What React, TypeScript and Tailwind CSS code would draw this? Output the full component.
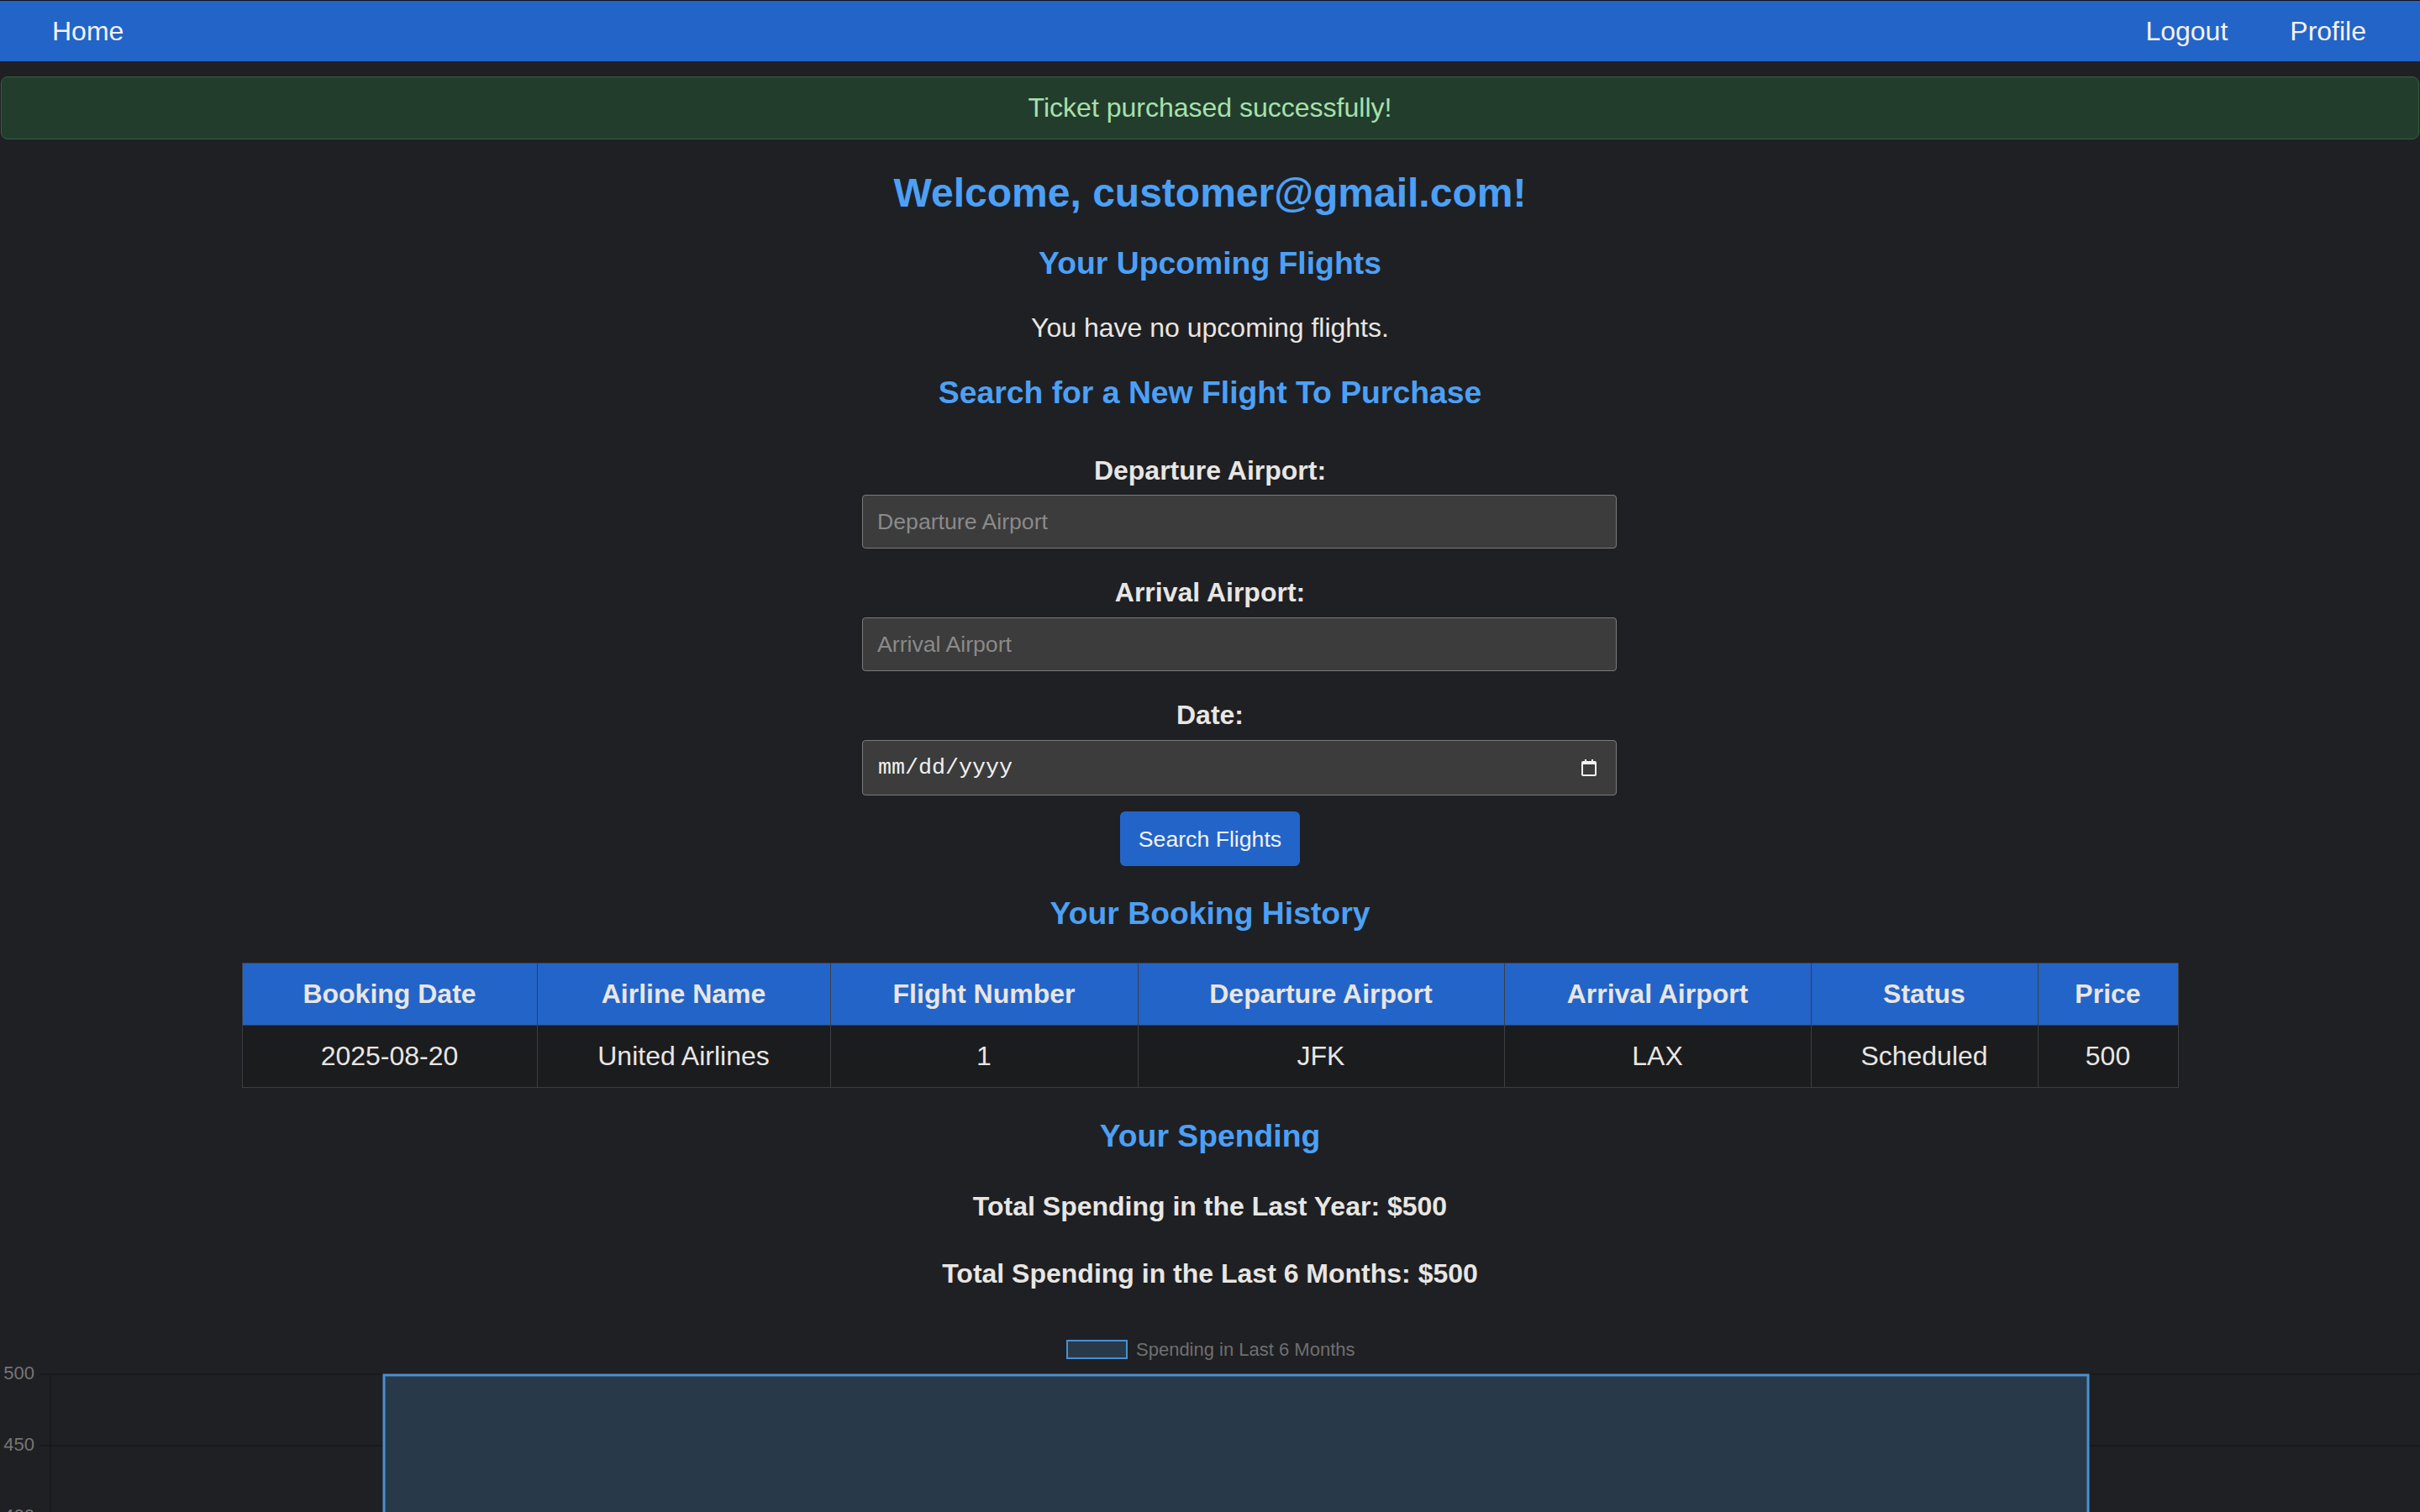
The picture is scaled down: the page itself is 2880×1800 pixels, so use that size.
const bookings = [
  {
    date: '2025-08-20',
    airline: 'United Airlines',
    flight: '1',
    from: 'JFK',
    to: 'LAX',
    status: 'Scheduled',
    price: '500',
  },
]

const columns = [
  { label: 'Booking Date', w: 'w-[351px]' },
  { label: 'Airline Name', w: 'w-[349px]' },
  { label: 'Flight Number', w: 'w-[366px]' },
  { label: 'Departure Airport', w: 'w-[436px]' },
  { label: 'Arrival Airport', w: 'w-[365px]' },
  { label: 'Status', w: 'w-[270px]' },
  { label: 'Price', w: 'w-[167px]' },
]

function CalendarIcon() {
  return (
    <svg width="20" height="22" viewBox="0 0 20 22" fill="none">
      <rect x="2" y="4" width="16" height="16" rx="1" stroke="#f2f2f2" strokeWidth="2" />
      <rect x="2" y="4" width="16" height="3" fill="#f2f2f2" />
      <rect x="5" y="1" width="2" height="4" fill="#f2f2f2" />
      <rect x="13" y="1" width="2" height="4" fill="#f2f2f2" />
    </svg>
  )
}

function SpendingChart() {
  // plot area starts at x=60, one category, bar is 72% of the width
  return (
    <svg className="mt-[36px] block h-[230px] w-full" viewBox="0 0 2880 230" fontFamily="'Liberation Sans', Arial, sans-serif">
      {/* legend */}
      <rect x="1270" y="25" width="71" height="21" fill="#283a4a" stroke="#4a8fd0" strokeWidth="2" />
      <text x="1352" y="43" fontSize="22" fill="#6f6f6f">Spending in Last 6 Months</text>

      {/* grid */}
      <line x1="48" y1="65" x2="2880" y2="65" stroke="#18191b" strokeWidth="2" />
      <line x1="48" y1="150" x2="2880" y2="150" stroke="#18191b" strokeWidth="2" />
      <line x1="48" y1="235" x2="2880" y2="235" stroke="#18191b" strokeWidth="2" />
      <line x1="60" y1="65" x2="60" y2="230" stroke="#18191b" strokeWidth="2" />

      {/* y ticks */}
      <text x="41" y="71" fontSize="22" fill="#767676" textAnchor="end">500</text>
      <text x="41" y="156" fontSize="22" fill="#767676" textAnchor="end">450</text>
      <text x="41" y="241" fontSize="22" fill="#767676" textAnchor="end">400</text>

      {/* bar */}
      <rect x="457" y="66" width="2028" height="200" fill="#283a4a" stroke="#4a8fd0" strokeWidth="3" />
    </svg>
  )
}

export default function App() {
  return (
    <div className="min-h-screen bg-[#1f2023] font-['Liberation_Sans',Arial,sans-serif] text-[#e8e6e3]">
      {/* top nav */}
      <nav className="flex h-[73px] items-center justify-between border-t border-[#111214] bg-[#2364c8] pr-[64px] pl-[62px] text-[32px] leading-[37px] text-[#f2f2f2]">
        <span>Home</span>
        <div className="flex items-center gap-[74px]">
          <span>Logout</span>
          <span>Profile</span>
        </div>
      </nav>

      <div className="mx-px mt-[18px] rounded-[8px] border border-[#35603f] bg-[#233d2d] py-[18px] text-center text-[32px] leading-[37px] text-[#a8e0ac]">
        Ticket purchased successfully!
      </div>

      <div className="flex flex-col items-center text-center">
        <h1 className="mt-[36px] text-[48px] leading-[56px] font-bold text-[#4ca0f6]">Welcome, customer@gmail.com!</h1>

        <h2 className="mt-[34px] text-[37.33px] leading-[43px] font-bold text-[#4ca0f6]">Your Upcoming Flights</h2>
        <p className="mt-[37px] text-[32px] leading-[37px]">You have no upcoming flights.</p>

        <h2 className="mt-[37px] text-[37.33px] leading-[43px] font-bold text-[#4ca0f6]">Search for a New Flight To Purchase</h2>

        <form className="mt-[53px] flex w-[828px] flex-col items-start" onSubmit={(e) => e.preventDefault()}>
          <label className="w-full text-center text-[32px] leading-[37px] font-bold">Departure Airport:</label>
          <input
            className="mt-[10px] h-[64px] w-[898px] shrink-0 rounded-[4px] border border-[#7a7a7a] bg-[#3c3c3c] pl-[17px] text-[26.67px] text-[#e8e6e3] outline-none placeholder:text-[#8a8a8a]"
            placeholder="Departure Airport"
          />

          <label className="mt-[34px] w-full text-center text-[32px] leading-[37px] font-bold">Arrival Airport:</label>
          <input
            className="mt-[11px] h-[64px] w-[898px] shrink-0 rounded-[4px] border border-[#7a7a7a] bg-[#3c3c3c] pl-[17px] text-[26.67px] text-[#e8e6e3] outline-none placeholder:text-[#8a8a8a]"
            placeholder="Arrival Airport"
          />

          <label className="mt-[34px] w-full text-center text-[32px] leading-[37px] font-bold">Date:</label>
          <div className="mt-[11px] flex h-[66px] w-[898px] shrink-0 items-center justify-between rounded-[4px] border border-[#7a7a7a] bg-[#3c3c3c] pr-[22px] pl-[18px]">
            <span className="font-['Liberation_Mono',monospace] text-[26.67px] text-[#f0f0f0]">mm/dd/yyyy</span>
            <CalendarIcon />
          </div>

          <div className="flex w-full justify-center">
            <button
              type="submit"
              className="mt-[19px] h-[65px] w-[214px] rounded-[6px] bg-[#2364c8] text-[26.67px] text-[#f2f2f2]"
            >
              Search Flights
            </button>
          </div>
        </form>

        <h2 className="mt-[35px] text-[37.33px] leading-[43px] font-bold text-[#4ca0f6]">Your Booking History</h2>

        <table className="mt-[37px] w-[2304px] table-fixed border-collapse border border-[#3d3e42] text-[32px] leading-[37px]">
          <thead>
            <tr>
              {columns.map((c) => (
                <th key={c.label} className={`${c.w} h-[74px] border border-[#3d3e42] bg-[#2364c8] font-bold`}>
                  {c.label}
                </th>
              ))}
            </tr>
          </thead>
          <tbody>
            {bookings.map((b) => (
              <tr key={b.date + b.flight}>
                <td className="h-[74px] border border-[#3d3e42] bg-[#1b1c1e]">{b.date}</td>
                <td className="border border-[#3d3e42] bg-[#1b1c1e]">{b.airline}</td>
                <td className="border border-[#3d3e42] bg-[#1b1c1e]">{b.flight}</td>
                <td className="border border-[#3d3e42] bg-[#1b1c1e]">{b.from}</td>
                <td className="border border-[#3d3e42] bg-[#1b1c1e]">{b.to}</td>
                <td className="border border-[#3d3e42] bg-[#1b1c1e]">{b.status}</td>
                <td className="border border-[#3d3e42] bg-[#1b1c1e]">{b.price}</td>
              </tr>
            ))}
          </tbody>
        </table>

        <h2 className="mt-[36px] text-[37.33px] leading-[43px] font-bold text-[#4ca0f6]">Your Spending</h2>
        <p className="mt-[44px] text-[32px] leading-[37px] font-bold">Total Spending in the Last Year: $500</p>
        <p className="mt-[43px] text-[32px] leading-[37px] font-bold">Total Spending in the Last 6 Months: $500</p>
      </div>

      <SpendingChart />
    </div>
  )
}
